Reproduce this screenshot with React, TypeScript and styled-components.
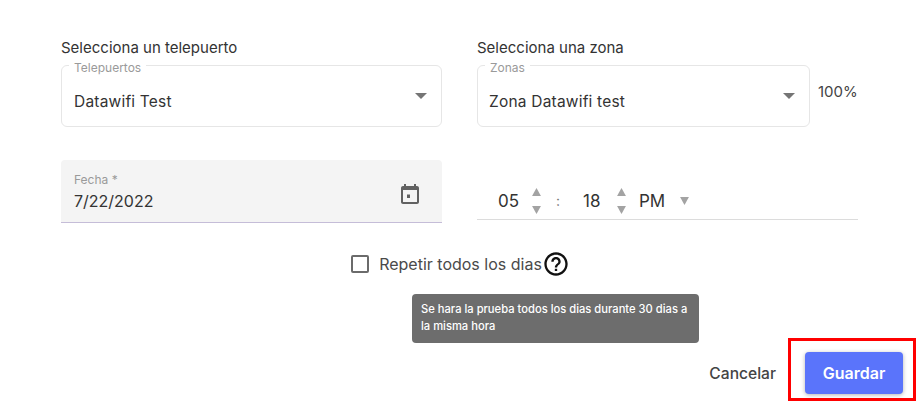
import React from "react";
import styled, { createGlobalStyle } from "styled-components";

const Global = createGlobalStyle`
  html, body { margin: 0; padding: 0; background: #fff; }
  body { font-family: Inter, "Noto Sans", sans-serif; color: #2f2f2f; }
`;

const Page = styled.div`
  width: 921px;
  height: 404px;
  box-sizing: border-box;
  padding: 38px 5px 0 61px;
  position: relative;
  overflow: hidden;
`;

const Grid = styled.div`
  display: grid;
  grid-template-columns: 381px 381px;
  column-gap: 35px;
  row-gap: 33px;
`;

const Field = styled.div`
  display: flex;
  flex-direction: column;
  gap: 7px;
`;

const Heading = styled.div`
  font-size: 15px;
  line-height: 20px;
  color: #333;
`;

const SelectRow = styled.div`
  display: flex;
  align-items: flex-start;
  gap: 8px;
`;

const SelectBox = styled.div<{ $width: number; $inset: number }>`
  position: relative;
  width: ${(p) => p.$width}px;
  height: 62px;
  box-sizing: border-box;
  border: 1px solid #e6e6e6;
  border-radius: 6px;
  padding: 0 12px 0 ${(p) => p.$inset}px;
  display: flex;
  align-items: center;
  justify-content: space-between;
  font-size: 15.5px;
  color: #333;
`;

const Value = styled.span`
  letter-spacing: 0.2px;
  margin-top: 10px;
`;

const Floating = styled.span`
  position: absolute;
  top: -4px;
  left: 7px;
  padding: 0 5px;
  background: #fff;
  font-size: 12px;
  line-height: 12px;
  color: #9a9a9a;
`;

const Caret = styled.svg`
  width: 12px;
  height: 6px;
  fill: #757575;
  margin-right: 2px;
`;

const Percent = styled.span`
  font-size: 15px;
  line-height: 20px;
  margin-top: 17px;
  color: #444;
`;

const DateBox = styled.div`
  height: 63px;
  box-sizing: border-box;
  background: #f4f4f4;
  border-bottom: 1px solid #c5bdd8;
  border-radius: 4px 4px 0 0;
  padding: 12px 20px 0 13px;
  display: flex;
  justify-content: space-between;
  align-items: flex-start;
`;

const DateText = styled.div`
  display: flex;
  flex-direction: column;
  gap: 4px;
`;

const DateLabel = styled.span`
  font-size: 12px;
  line-height: 15px;
  color: #9a9a9a;
`;

const DateValue = styled.span`
  font-size: 16px;
  line-height: 20px;
  color: #333;
`;

const CalIcon = styled.svg`
  width: 24px;
  height: 24px;
  fill: #616161;
  margin-top: 10px;
`;

const TimeBox = styled.div`
  align-self: end;
  height: 40px;
  margin-bottom: 3px;
  box-sizing: border-box;
  border-bottom: 1px solid #dcdcdc;
  display: flex;
  align-items: center;
  font-size: 17px;
  color: #333;
  padding: 2px 0 0 21px;
`;

const TimeNum = styled.span`
  width: 21px;
`;

const Spinner = styled.span`
  display: flex;
  flex-direction: column;
  gap: 10px;
  margin-left: 13px;
`;

const Tri = styled.svg`
  display: block;
  width: 9px;
  height: 8px;
  fill: #a3a3a3;
`;

const Colon = styled.span`
  width: 10px;
  margin: 0 20px 0 12px;
  font-size: 14px;
  color: #777;
  text-align: center;
`;

const Ampm = styled.span`
  margin-left: 13px;
`;

const AmpmCaret = styled.svg`
  width: 9px;
  height: 8px;
  fill: #a3a3a3;
  margin-left: 15px;
`;

const RepeatRow = styled.div`
  display: flex;
  align-items: center;
  justify-content: center;
  margin: 28px 0 0;
  padding-right: 56px;
  height: 26px;
  font-size: 16px;
  color: #4a4a4a;
`;

const Check = styled.span`
  width: 18px;
  height: 18px;
  box-sizing: border-box;
  border: 2px solid #6b6b6b;
  border-radius: 2px;
  margin-right: 10px;
`;

const Help = styled.svg`
  width: 28px;
  height: 28px;
  flex: none;
  fill: #111;
`;

const Tooltip = styled.div`
  position: absolute;
  left: 412px;
  top: 294px;
  width: 287px;
  height: 49px;
  box-sizing: border-box;
  background: #6d6d6d;
  border-radius: 4px;
  padding: 7px 8px 0 9px;
  color: #fff;
  font-size: 11.2px;
  font-weight: 500;
  line-height: 17px;
`;

const Footer = styled.div`
  display: flex;
  justify-content: flex-end;
  align-items: center;
  gap: 12px;
  margin-top: 61px;
`;

const Cancel = styled.span`
  font-size: 15.6px;
  font-weight: 500;
  color: #444;
  margin-top: 7px;
`;

const Highlight = styled.div`
  width: 128px;
  height: 63px;
  box-sizing: border-box;
  border: 3px solid #f00;
  padding: 11px 0 0 14px;
`;

const SaveButton = styled.button`
  width: 98px;
  height: 42px;
  border: 0;
  padding: 0;
  border-radius: 4px;
  background: #5a74fb;
  color: #fff;
  font-family: inherit;
  font-size: 16px;
  font-weight: 600;
  box-shadow: 0 1px 4px rgba(0, 0, 0, 0.3);
`;

const CaretDown = () => (
  <Caret viewBox="0 0 14 7">
    <path d="M0 0h14L7 7z" />
  </Caret>
);

const Arrows = () => (
  <Spinner>
    <Tri viewBox="0 0 10 9"><path d="M5 0l5 9H0z" /></Tri>
    <Tri viewBox="0 0 10 9"><path d="M0 0h10L5 9z" /></Tri>
  </Spinner>
);

export default function App() {
  return (
    <Page>
      <Global />
      <Grid>
        <Field>
          <Heading>Selecciona un telepuerto</Heading>
          <SelectRow>
            <SelectBox $width={381} $inset={12}>
              <Floating>Telepuertos</Floating>
              <Value>Datawifi Test</Value>
              <CaretDown />
            </SelectBox>
          </SelectRow>
        </Field>
        <Field>
          <Heading>Selecciona una zona</Heading>
          <SelectRow>
            <SelectBox $width={333} $inset={11}>
              <Floating>Zonas</Floating>
              <Value>Zona Datawifi test</Value>
              <CaretDown />
            </SelectBox>
            <Percent>100%</Percent>
          </SelectRow>
        </Field>
        <DateBox>
          <DateText>
            <DateLabel>Fecha *</DateLabel>
            <DateValue>7/22/2022</DateValue>
          </DateText>
          <CalIcon viewBox="0 0 24 24">
            <path d="M19 4h-1V2h-2v2H8V2H6v2H5c-1.1 0-2 .9-2 2v14c0 1.1.9 2 2 2h14c1.1 0 2-.9 2-2V6c0-1.1-.9-2-2-2zm0 16H5V8h14v12zM12 12.5H9v3.5h3v-3.5z" />
          </CalIcon>
        </DateBox>
        <TimeBox>
          <TimeNum>05</TimeNum>
          <Arrows />
          <Colon>:</Colon>
          <TimeNum>18</TimeNum>
          <Arrows />
          <Ampm>PM</Ampm>
          <AmpmCaret viewBox="0 0 10 9"><path d="M0 0h10L5 9z" /></AmpmCaret>
        </TimeBox>
      </Grid>
      <RepeatRow>
        <Check />
        Repetir todos los dias
        <Help viewBox="0 0 24 24">
          <path d="M11 18h2v-2h-2v2zm1-16C6.48 2 2 6.48 2 12s4.48 10 10 10 10-4.48 10-10S17.52 2 12 2zm0 18c-4.41 0-8-3.59-8-8s3.59-8 8-8 8 3.59 8 8-3.59 8-8 8zm0-14c-2.21 0-4 1.79-4 4h2c0-1.1.9-2 2-2s2 .9 2 2c0 2-3 1.75-3 5h2c0-2.25 3-2.5 3-5 0-2.21-1.79-4-4-4z" />
        </Help>
      </RepeatRow>
      <Tooltip>Se hara la prueba todos los dias durante 30 dias a la misma hora</Tooltip>
      <Footer>
        <Cancel>Cancelar</Cancel>
        <Highlight>
          <SaveButton>Guardar</SaveButton>
        </Highlight>
      </Footer>
    </Page>
  );
}
